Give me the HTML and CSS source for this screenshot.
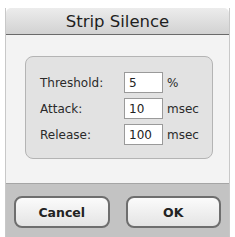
FILE: index.html
```html
<!DOCTYPE html>
<html lang="en">
<head>
  <meta charset="UTF-8">
  <title>Strip Silence</title>
  <link rel="stylesheet" href="styles.css">
</head>
<body>

<div class="dialog">
  <div class="titlebar">Strip Silence</div>

  <div class="content">
    <div class="panel">
      <div class="row">
        <label>Threshold:</label>
        <input type="text" value="5">
        <span class="unit">%</span>
      </div>
      <div class="row">
        <label>Attack:</label>
        <input type="text" value="10">
        <span class="unit">msec</span>
      </div>
      <div class="row">
        <label>Release:</label>
        <input type="text" value="100">
        <span class="unit">msec</span>
      </div>
    </div>
  </div>

  <div class="buttons">
    <button>Cancel</button>
    <button>OK</button>
  </div>
</div>

</body>
</html>
```

FILE: styles.css
```css
body {
  margin: 0;
  background: #fff;
  font-family: "DejaVu Sans", Verdana, sans-serif;
}

.dialog {
  margin: 8px 5px 0 5px;
  width: 225px;
  height: 229px;
  display: flex;
  flex-direction: column;
  border-left: 1px solid #c8c8c8;
  border-right: 1px solid #c8c8c8;
  box-sizing: border-box;
}

.titlebar {
  height: 27px;
  background: linear-gradient(#ececec, #d2d2d2);
  border-bottom: 1px solid #6a6a6a;
  border-radius: 5px 5px 0 0;
  text-align: center;
  font-size: 16.5px;
  line-height: 28px;
  color: #1e1e1e;
  box-sizing: border-box;
}

.content {
  background: #f3f3f3;
  padding: 21px 16px 0 19px;
  height: 148px;
  box-sizing: border-box;
}

.panel {
  height: 103px;
  background: #e2e2e2;
  border: 1px solid #b4b4b4;
  border-radius: 8px;
  padding: 15px 0 0 14px;
  box-sizing: border-box;
  display: flex;
  flex-direction: column;
  gap: 5px;
}

.row {
  display: flex;
  align-items: center;
  height: 21px;
  font-size: 12px;
  color: #2a2a2a;
}

.row label {
  width: 84px;
}

.row input {
  width: 39px;
  height: 21px;
  box-sizing: border-box;
  border: 1px solid #9a9a9a;
  background: #fff;
  font-family: inherit;
  font-size: 12px;
  padding: 0 0 0 4px;
  color: #222;
}

.unit {
  margin-left: 4px;
}

.buttons {
  flex: 1;
  background: #c3c3c3;
  border-top: 1px solid #a5a5a5;
  display: flex;
  gap: 16px;
  padding: 12px 8px 0 8px;
}

.buttons button {
  width: 96px;
  height: 32px;
  border: 2px solid #6e6e6e;
  border-radius: 8px;
  background: linear-gradient(#fbfbfb, #e4e4e4);
  font-family: inherit;
  font-weight: bold;
  font-size: 12.5px;
  color: #222;
}
```
